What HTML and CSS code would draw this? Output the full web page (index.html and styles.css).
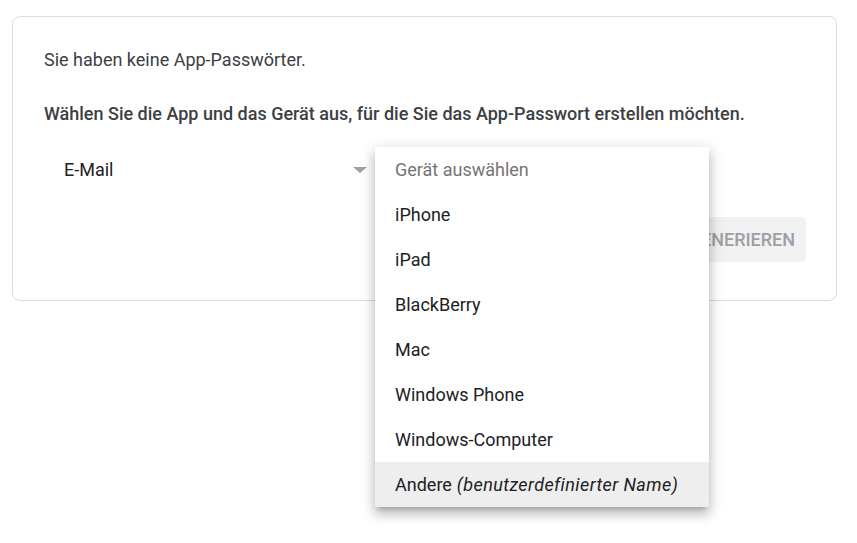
FILE: index.html
```html
<!DOCTYPE html>
<html lang="de">
<head>
<meta charset="utf-8">
<title>App-Passwörter</title>
<link rel="stylesheet" href="styles.css">
</head>
<body>
<div class="card">
  <p class="empty">Sie haben keine App-Passwörter.</p>
  <p class="lead">Wählen Sie die App und das Gerät aus, für die Sie das App-Passwort erstellen möchten.</p>
  <div class="selects">
    <div class="select app">
      <span class="value">E-Mail</span>
      <span class="arrow"></span>
    </div>
    <div class="select device">
      <span class="value placeholder">Gerät auswählen</span>
      <ul class="menu">
        <li class="item placeholder">Gerät auswählen</li>
        <li class="item">iPhone</li>
        <li class="item">iPad</li>
        <li class="item">BlackBerry</li>
        <li class="item">Mac</li>
        <li class="item">Windows Phone</li>
        <li class="item">Windows-Computer</li>
        <li class="item active">Andere <em>(benutzerdefinierter Name)</em></li>
      </ul>
    </div>
  </div>
  <div class="actions">
    <button class="btn" disabled>Generieren</button>
  </div>
</div>
</body>
</html>
```

FILE: styles.css
```css
* { box-sizing: border-box; }
html, body { margin: 0; background: #fff; }
body {
  min-height: 543px;
  font-family: Roboto, "Noto Sans", sans-serif;
  color: #3c4043;
}
.card {
  margin: 16px 0 0 12px;
  width: 825px;
  border: 1px solid #dadce0;
  border-radius: 8px;
  padding: 31px 30px 38px 31px;
}
.empty {
  margin: 0;
  font-size: 18px;
  line-height: 24px;
  color: #3c4043;
}
.lead {
  margin: 30px 0 0;
  font-size: 18px;
  line-height: 24px;
  font-weight: 500;
  color: #3c4043;
}
.selects {
  display: flex;
  margin-top: 21px;
}
.select {
  position: relative;
  height: 45px;
  display: flex;
  align-items: center;
  font-size: 18px;
  font-weight: 400;
  color: #202124;
}
.select.app {
  width: 331px;
  padding: 0 8px 0 20px;
  justify-content: space-between;
}
.select.device {
  width: 334px;
  padding: 0 20px;
}
.arrow {
  width: 0;
  height: 0;
  border-left: 7px solid transparent;
  border-right: 7px solid transparent;
  border-top: 6px solid #a0a0a0;
}
.placeholder { color: #757575; }
.menu {
  position: absolute;
  top: 0;
  left: 0;
  right: 0;
  margin: 0;
  padding: 0;
  list-style: none;
  background: #fff;
  box-shadow: 0 8px 10px 1px rgba(0,0,0,.14), 0 3px 14px 2px rgba(0,0,0,.12), 0 5px 5px -3px rgba(0,0,0,.2);
  z-index: 2;
}
.item {
  height: 45px;
  display: flex;
  align-items: center;
  padding: 0 20px;
  font-size: 18px;
  font-weight: 400;
  color: #202124;
  white-space: nowrap;
}
.item.placeholder { color: #757575; }
.item.active { background: #eeeeee; }
.item em { font-style: italic; margin-left: 5px; letter-spacing: 0.42px; }
.actions {
  display: flex;
  justify-content: flex-end;
  margin-top: 25px;
}
.btn {
  height: 45px;
  padding: 0 11px 0 12px;
  border: none;
  border-radius: 4px;
  background: #f1f1f1;
  color: #9aa0a6;
  font-family: Roboto, "Noto Sans", sans-serif;
  font-size: 18px;
  font-weight: 500;
  text-transform: uppercase;
}
```
